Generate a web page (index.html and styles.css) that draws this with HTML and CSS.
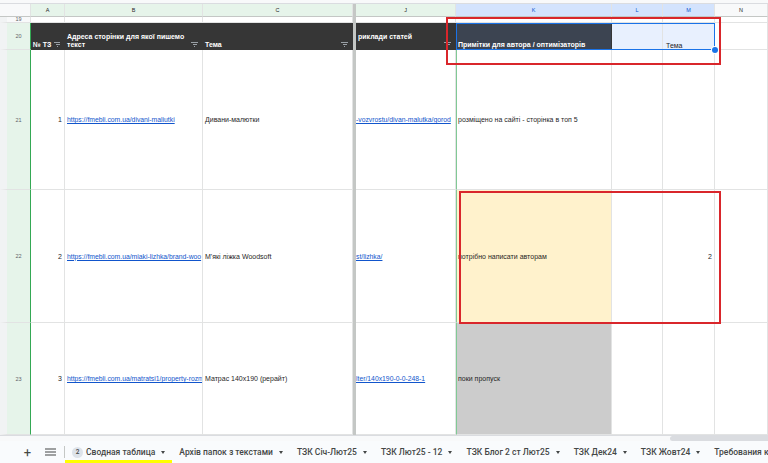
FILE: index.html
```html
<!DOCTYPE html>
<html lang="uk">
<head>
    <meta charset="UTF-8">
    <title>Сводная таблица</title>
    <link rel="stylesheet" href="styles.css">
</head>
<body>

<div class="topline"></div>

<div class="wrap">
    <div class="sheet">
        <!-- заголовки колонок -->
        <div class="corner"></div>
        <div class="colhead on">A</div>
        <div class="colhead on">B</div>
        <div class="colhead on">C</div>
        <div class="freeze"></div>
        <div class="colhead on">J</div>
        <div class="colhead sel">K</div>
        <div class="colhead sel">L</div>
        <div class="colhead sel">M</div>
        <div class="colhead">N</div>

        <!-- рядок 19 -->
        <div class="rowhead short">19</div>
        <div class="cell"></div>
        <div class="cell"></div>
        <div class="cell"></div>
        <div class="freeze"></div>
        <div class="cell"></div>
        <div class="cell"></div>
        <div class="cell"></div>
        <div class="cell"></div>
        <div class="cell"></div>

        <!-- рядок 20: шапка таблиці -->
        <div class="rowhead on">20</div>
        <div class="cell head"><span class="grow">№ ТЗ</span><span class="filter"></span></div>
        <div class="cell head"><span class="grow">Адреса сторінки для якої пишемо<br>текст</span><span class="filter"></span></div>
        <div class="cell head"><span class="grow">Тема</span><span class="filter"></span></div>
        <div class="freeze"></div>
        <div class="cell head"><span class="grow top">риклади статей</span><span class="filter"></span></div>
        <div class="cell head picked">Примітки для автора / оптимізаторів</div>
        <div class="cell light"></div>
        <div class="cell light plain">Тема</div>
        <div class="cell"></div>

        <!-- рядок 21 -->
        <div class="rowhead on">21</div>
        <div class="cell num">1</div>
        <div class="cell"><a href="#">https://fmebli.com.ua/divani-maliutki</a></div>
        <div class="cell">Дивани-малютки</div>
        <div class="freeze"></div>
        <div class="cell edge"><a href="#">-vozvrostu/divan-malutka/gorod</a></div>
        <div class="cell note">розміщено на сайті - сторінка в топ 5</div>
        <div class="cell"></div>
        <div class="cell"></div>
        <div class="cell"></div>

        <!-- рядок 22 -->
        <div class="rowhead on">22</div>
        <div class="cell num">2</div>
        <div class="cell"><a href="#">https://fmebli.com.ua/miaki-lizhka/brand-woo</a></div>
        <div class="cell">М'які ліжка Woodsoft</div>
        <div class="freeze"></div>
        <div class="cell edge"><a href="#">st/lizhka/</a></div>
        <div class="cell note todo">потрібно написати авторам</div>
        <div class="cell"></div>
        <div class="cell num">2</div>
        <div class="cell"></div>

        <!-- рядок 23 -->
        <div class="rowhead on">23</div>
        <div class="cell num">3</div>
        <div class="cell"><a href="#">https://fmebli.com.ua/matratsi1/property-rozm</a></div>
        <div class="cell">Матрас 140х190 (рерайт)</div>
        <div class="freeze"></div>
        <div class="cell edge"><a href="#">lter/140x190-0-0-248-1</a></div>
        <div class="cell note skip">поки пропуск</div>
        <div class="cell"></div>
        <div class="cell"></div>
        <div class="cell"></div>
    </div>

    <!-- виділення і червоні рамки поверх таблиці -->
    <div class="selection"></div>
    <div class="handle"></div>
    <div class="mark mark-top"></div>
    <div class="mark mark-row"></div>
</div>

<div class="scrollrow"><div class="thumb"></div></div>

<div class="tabs">
    <span class="btn">+</span>
    <span class="btn">
        <svg width="11" height="8" viewBox="0 0 11 8"><path d="M0 1h11M0 4h11M0 7h11" stroke="#444746" stroke-width="1.2"/></svg>
    </span>
    <span class="sep"></span>
    <span class="tab active"><span class="badge">2</span>Сводная таблица<span class="caret"></span></span>
    <span class="tab">Архів папок з текстами<span class="caret"></span></span>
    <span class="tab">ТЗК Січ-Лют25<span class="caret"></span></span>
    <span class="tab">ТЗК Лют25 - 12<span class="caret"></span></span>
    <span class="tab">ТЗК Блог 2 ст Лют25<span class="caret"></span></span>
    <span class="tab">ТЗК Дек24<span class="caret"></span></span>
    <span class="tab">ТЗК Жовт24<span class="caret"></span></span>
    <span class="tab">Требования к</span>
</div>

</body>
</html>
```

FILE: styles.css
```css
body {
    margin: 0;
    width: 768px;
    height: 463px;
    overflow: hidden;
    background: #fff;
    font-family: "Liberation Sans", Arial, sans-serif;
}
.topline {
    height: 4px;
    background: #f8f9fa;
    border-bottom: 1px solid #dadce0;
    box-sizing: border-box;
}
.wrap {
    position: relative;
}
.sheet {
    display: grid;
    grid-template-columns: 31px 34px 138px 150px 3px 100px 156px 51px 52px 53px;
    grid-template-rows: 13px 6px 27px 140px 133px 112px;
}
.sheet > div {
    box-sizing: border-box;
    border-right: 1px solid #e2e3e3;
    border-bottom: 1px solid #e2e3e3;
    overflow: hidden;
    white-space: nowrap;
    display: flex;
    align-items: center;
    font-size: 7px;
    color: #1f1f1f;
}
.corner {
    background: #f8f9fa;
    border-bottom: 1px solid #c4c7c5 !important;
}
.colhead {
    justify-content: center;
    background: #f8f9fa;
    color: #444746;
    font-size: 5.5px !important;
    border-bottom: 1px solid #c4c7c5 !important;
}
.colhead.on {
    background: #e6f4ea;
}
.colhead.sel {
    background: #d3e3fd;
    color: #0b57d0 !important;
}
.freeze {
    background: #c4c7c5;
    border: none !important;
}
.rowhead {
    justify-content: center;
    background: #f8f9fa;
    border-left: 7px solid #f1f3f4;
    color: #5f6368 !important;
    font-size: 5.5px !important;
}
.rowhead.short {
    align-items: flex-end !important;
    line-height: 5px;
}
.rowhead.on {
    background: #e6f4ea;
    border-right: 1px solid #34a853 !important;
}
.cell {
    padding: 0 2px;
}
.cell.edge {
    padding-left: 0;
}
.cell.head {
    align-items: flex-end;
    padding-bottom: 0;
    background: #363636;
    color: #fff;
    font-weight: bold;
    line-height: 8px;
    border-color: #363636;
}
.cell.head.picked {
    background: #3c4451;
}
.grow {
    flex: 1;
}
.grow.top {
    align-self: flex-start;
    margin-top: 10px;
}
.filter {
    width: 7px;
    height: 5px;
    margin: 0 2px 2px 3px;
    background:
        linear-gradient(#9aa0a6, #9aa0a6) 0 0 / 7px 1px no-repeat,
        linear-gradient(#9aa0a6, #9aa0a6) 1.5px 2px / 4px 1px no-repeat,
        linear-gradient(#9aa0a6, #9aa0a6) 3px 4px / 1px 1px no-repeat;
}
.cell.light {
    background: #e8f0fe;
}
.cell.plain {
    align-items: flex-end;
    padding-left: 3px;
}
.cell.num {
    justify-content: flex-end;
}
.cell.note {
    border-left: 1px solid #81c995;
    padding-left: 1px;
}
.cell.todo {
    background: #fff2cc;
}
.cell.skip {
    background: #cccccc;
}
a {
    color: #1155cc;
    font-size: 6.8px;
    text-decoration: underline;
}
.selection {
    position: absolute;
    left: 456px;
    top: 19px;
    width: 259px;
    height: 27px;
    box-sizing: border-box;
    border: 1px solid #1a73e8;
}
.handle {
    position: absolute;
    left: 712px;
    top: 43px;
    width: 6px;
    height: 6px;
    border-radius: 50%;
    background: #1a73e8;
    box-shadow: 0 0 0 1px #fff;
}
.mark {
    position: absolute;
    box-sizing: border-box;
    border: 2px solid #d9262b;
}
.mark-top {
    left: 446px;
    top: 13px;
    width: 275px;
    height: 48px;
}
.mark-row {
    left: 459px;
    top: 187px;
    width: 262px;
    height: 133px;
}
.scrollrow {
    height: 6px;
    display: flex;
    justify-content: flex-end;
    align-items: flex-start;
    background: #f8f9fa;
    border-top: 1px solid #dadce0;
    box-sizing: border-box;
}
.thumb {
    width: 98px;
    height: 5px;
    background: #dadce0;
    border-radius: 3px 0 0 3px;
}
.tabs {
    height: 22px;
    display: flex;
    align-items: center;
    padding-left: 16px;
    overflow: hidden;
    background: #f9fbfd;
    font-family: Roboto, "Liberation Sans", sans-serif;
    font-weight: 500;
    font-size: 8.5px;
    color: #444746;
    white-space: nowrap;
}
.tabs > span {
    flex-shrink: 0;
}
.btn {
    width: 23px;
    display: flex;
    justify-content: center;
    align-items: center;
    font-size: 13px;
    font-weight: 400;
}
.sep {
    width: 1px;
    height: 12px;
    margin: 0 0 0 2px;
    background: #c4c7c5;
}
.tab {
    display: flex;
    align-items: center;
    height: 22px;
    padding: 0 7px;
    box-sizing: border-box;
}
.tab.active {
    border-bottom: 3px solid #ffff00;
    padding-top: 3px;
}
.badge {
    width: 11px;
    height: 11px;
    border-radius: 50%;
    background: #dde3ea;
    font-size: 6.5px;
    display: flex;
    justify-content: center;
    align-items: center;
    margin-right: 3px;
}
.caret {
    width: 0;
    height: 0;
    margin-left: 6px;
    border-left: 2.5px solid transparent;
    border-right: 2.5px solid transparent;
    border-top: 3px solid #444746;
}
```
